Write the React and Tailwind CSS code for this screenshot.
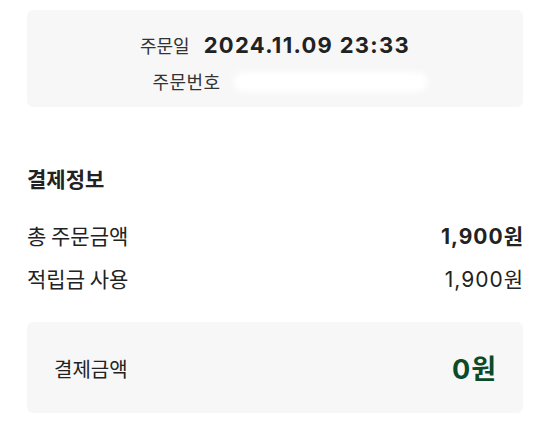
export default function App() {
  const ko = { fontFamily: '"Noto Sans CJK KR", "Noto Sans", sans-serif' };
  const num = { fontFamily: 'Inter, "Noto Sans CJK KR", sans-serif' };
  return (
    <div className="w-[550px] h-[430px] bg-white px-[27px] pt-[10px] text-[#222]" style={ko}>
      <div className="h-[97px] rounded-md bg-[#f7f7f7] flex flex-col items-center justify-center gap-[8px] pt-[10px]">
        <div className="flex items-center gap-[14px] h-[28px]">
          <span className="text-[18px] text-[#333]">주문일</span>
          <span className="text-[22px] font-bold tracking-[1.3px]" style={num}>2024.11.09 23:33</span>
        </div>
        <div className="flex items-center gap-[12px] h-[28px] pl-[30px]">
          <span className="text-[18px] text-[#333] tracking-[0.5px]">주문번호</span>
          <span className="w-[195px] h-[20px] rounded-full bg-white blur-[3px]"></span>
        </div>
      </div>
      <div className="mt-[58px] text-[21px] font-bold leading-[26px]">결제정보</div>
      <div className="mt-[30px] flex justify-between items-center h-[30px]">
        <span className="text-[21px]">총 주문금액</span>
        <span className="text-[21px] font-bold tracking-[1px]" style={num}>1,900<span style={ko} className="tracking-normal">원</span></span>
      </div>
      <div className="mt-[13px] flex justify-between items-center h-[30px]">
        <span className="text-[21px]">적립금 사용</span>
        <span className="text-[21px] tracking-[1px]" style={num}>1,900<span style={ko} className="tracking-normal">원</span></span>
      </div>
      <div className="mt-[28px] h-[91px] rounded-md bg-[#f7f7f7] flex items-center justify-between px-[27px] pt-[3px]">
        <span className="text-[20px] text-[#222]">결제금액</span>
        <span className="text-[27px] font-bold text-[#0c4a2a] tracking-[1px]" style={num}>0<span style={ko} className="tracking-normal">원</span></span>
      </div>
    </div>
  );
}
